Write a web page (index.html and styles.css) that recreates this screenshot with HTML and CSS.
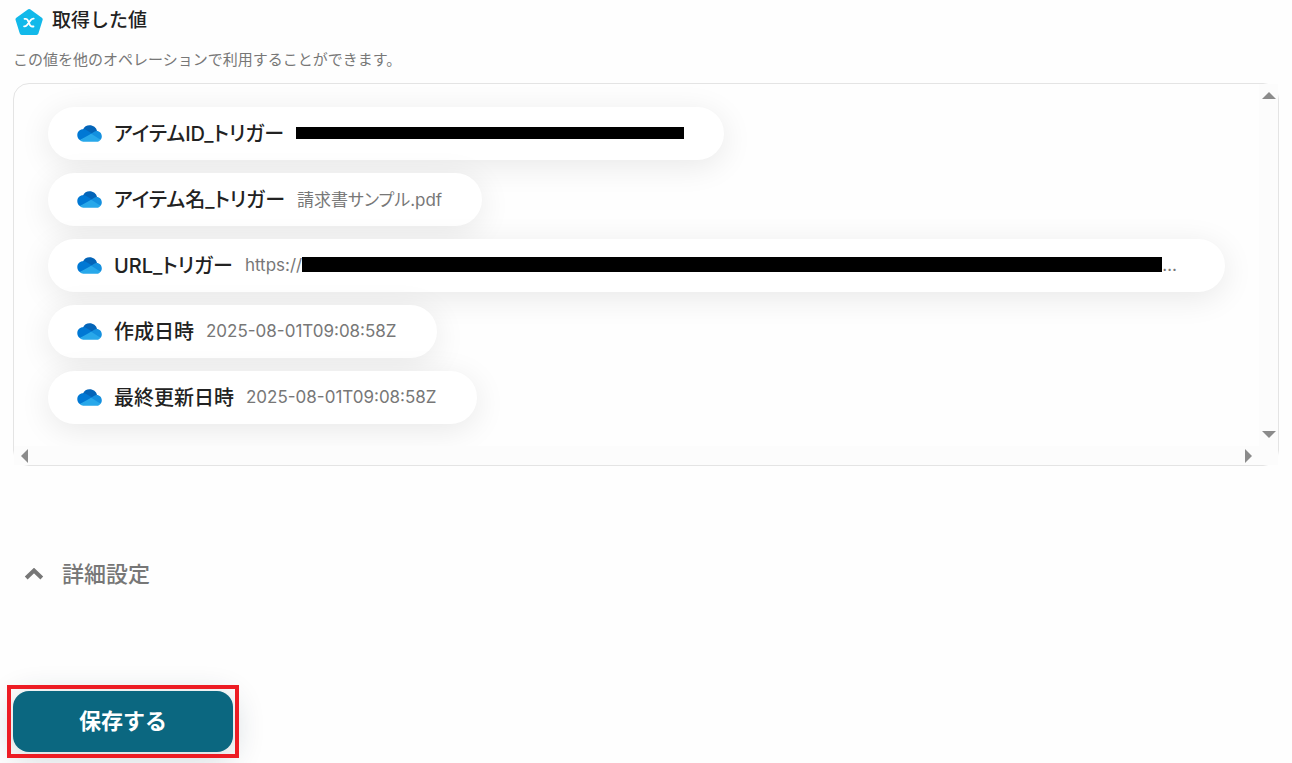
FILE: index.html
```html
<!DOCTYPE html>
<html lang="ja">
<head>
<meta charset="utf-8">
<title>取得した値</title>
<meta name="viewport" content="width=device-width, initial-scale=1">
<link rel="stylesheet" href="styles.css">
</head>
<body>
<svg class="defs" aria-hidden="true">
  <symbol id="cloud" viewBox="0 0 26 17">
    <path fill="#0364b8" d="M6 4.800C7.500 1.500 10 0 13 0c4 0 7 2.500 7.800 5.800L16 9.500 6 6z"/>
    <path fill="#0078d4" d="M6.300 4.200c2 0 3 .4 4.200 1.200L17 9.200 3.500 15.600C1.500 14.500.3 12.700.3 10.300c0-3.400 2.600-6.100 6-6.100z"/>
    <path fill="#1490df" d="M15.500 8.300c1.600-1.500 3-2.400 5-2.500 3 0 5.300 2.500 5.300 5.500 0 1.700-.6 3-1.600 4L13 10z"/>
    <path fill="#28a8ea" d="M3 15.300 14.800 8.800 24.600 14.900c-1 1.300-2.300 2.100-4.100 2.100H6.500c-1.300 0-2.500-.6-3.500-1.700z"/>
  </symbol>
</svg>
<main class="page">
  <header class="heading">
    <svg class="badge" viewBox="0 0 28 28" aria-hidden="true">
      <path fill="#12b9ea" stroke="#12b9ea" stroke-width="4" stroke-linejoin="round" d="M14 3 25.700 11.300 21.500 25H6.700L2.500 11.300z"/>
      <path fill="none" stroke="#fff" stroke-width="1.800" stroke-linecap="round" stroke-linejoin="round" d="M9.500 10.800h1.300c1 0 1.500.5 1.900 1.400l2.300 5c.4.900.9 1.300 1.900 1.300h1.600M18.700 10.700c-1.200-.1-2 .3-2.800 1.200l-4 5.300c-.8.900-1.600 1.300-2.800 1.200"/>
    </svg>
    <h1 class="title">取得した値</h1>
  </header>
  <p class="lead">この値を他のオペレーションで利用することができます。</p>
  <section class="panel" aria-label="取得した値">
    <ul class="values">
      <li class="chip"><svg class="cloud"><use href="#cloud"/></svg><span class="name">アイテムID_トリガー</span><span class="value"><span class="mask"></span></span></li>
      <li class="chip"><svg class="cloud"><use href="#cloud"/></svg><span class="name">アイテム名_トリガー</span><span class="value">請求書サンプル.pdf</span></li>
      <li class="chip chip-wide"><svg class="cloud"><use href="#cloud"/></svg><span class="name">URL_トリガー</span><span class="value value-url">https://<span class="mask mask-url"></span>…</span></li>
      <li class="chip"><svg class="cloud"><use href="#cloud"/></svg><span class="name">作成日時</span><span class="value">2025-08-01T09:08:58Z</span></li>
      <li class="chip"><svg class="cloud"><use href="#cloud"/></svg><span class="name">最終更新日時</span><span class="value">2025-08-01T09:08:58Z</span></li>
    </ul>
    <div class="track track-y">
      <svg class="arrow-y" viewBox="0 0 14 7"><path d="M7 0l7 7H0z"/></svg>
      <svg class="arrow-y" viewBox="0 0 14 7"><path d="M0 0h14L7 7z"/></svg>
    </div>
    <div class="track track-x">
      <svg class="arrow-x" viewBox="0 0 7 14"><path d="M7 0v14L0 7z"/></svg>
      <svg class="arrow-x" viewBox="0 0 7 14"><path d="M0 0l7 7-7 7z"/></svg>
    </div>
    <div class="track"></div>
  </section>
  <button class="details" type="button" aria-expanded="false">
    <svg class="chevron" viewBox="0 0 20 12" aria-hidden="true"><path d="M2.200 10 10 2.500 17.800 10"/></svg>
    詳細設定
  </button>
  <div class="highlight">
    <button class="save" type="button">保存する</button>
  </div>
</main>
</body>
</html>
```
FILE: styles.css
```css
* { box-sizing: border-box; }
body {
  margin: 0;
  background: #fefefe;
  color: #222;
  font-family: Inter, "Noto Sans CJK JP", sans-serif;
}
button { font: inherit; border: 0; cursor: pointer; }
.defs { display: none; }
.page { padding: 6px 13px 11px; }
.heading { display: flex; align-items: center; gap: 9px; height: 31px; padding-left: 2px; }
.badge { width: 28px; height: 28px; }
.title { margin: 0 0 1px; font-size: 19px; line-height: 28px; font-weight: 500; }
.lead {
  margin: 11px 0 12px;
  color: #777;
  font-size: 15px;
  line-height: 23px;
}
.panel {
  display: grid;
  grid-template-columns: minmax(0, 1fr) 19px;
  grid-template-rows: auto 19px;
  border: 1px solid #e4e4e4;
  border-radius: 16px;
}
.values {
  display: flex;
  flex-direction: column;
  align-items: flex-start;
  gap: 13px;
  margin: 0;
  padding: 23px 34px 22px;
  list-style: none;
  overflow: hidden;
  font-feature-settings: "palt";
}
.chip {
  display: flex;
  align-items: center;
  max-width: 100%;
  height: 53px;
  padding: 0 40px 0 29px;
  border-radius: 27px;
  background: #fff;
  box-shadow: 0 6px 32px rgba(0, 0, 0, .09);
}
.chip-wide { width: 100%; padding-right: 48px; }
.cloud { width: 25px; height: 17px; margin-right: 12px; flex: none; }
.name { padding-bottom: 2px; font-size: 20px; font-weight: 500; white-space: nowrap; margin-right: 12px; }
.value { display: flex; align-items: center; padding-bottom: 2px; color: #777; font-size: 17px; white-space: nowrap; }
.value-url { flex: 1; }
.mask { width: 388px; height: 12px; background: #000; }
.mask-url { flex: 1; width: auto; height: 15px; }
.track { display: flex; justify-content: space-between; align-items: center; background: #fcfcfc; }
.track-y { flex-direction: column; padding: 8px 0; }
.track-x { padding: 0 7px; }
.track svg { fill: #8b8b8b; }
.arrow-y { width: 14px; height: 7px; }
.arrow-x { width: 7px; height: 14px; }
.details {
  display: flex;
  align-items: center;
  gap: 18px;
  margin-top: 90px;
  padding: 0 11px;
  background: none;
  color: #777;
  font-size: 22px;
  line-height: 36px;
  font-weight: 500;
}
.chevron { width: 20px; height: 12px; fill: none; stroke: #777; stroke-width: 4; }
.highlight { position: relative; width: 220px; margin-top: 99px; }
.highlight::after {
  content: "";
  position: absolute;
  inset: -6px;
  border: 4px solid #ed1c24;
  pointer-events: none;
}
.save {
  display: block;
  width: 100%;
  height: 61px;
  padding: 0 0 6px;
  border-radius: 16px;
  background: #0b6780;
  color: #fff;
  font-size: 22px;
  font-weight: 700;
  box-shadow: 0 6px 32px rgba(11, 50, 70, .2);
}
```
